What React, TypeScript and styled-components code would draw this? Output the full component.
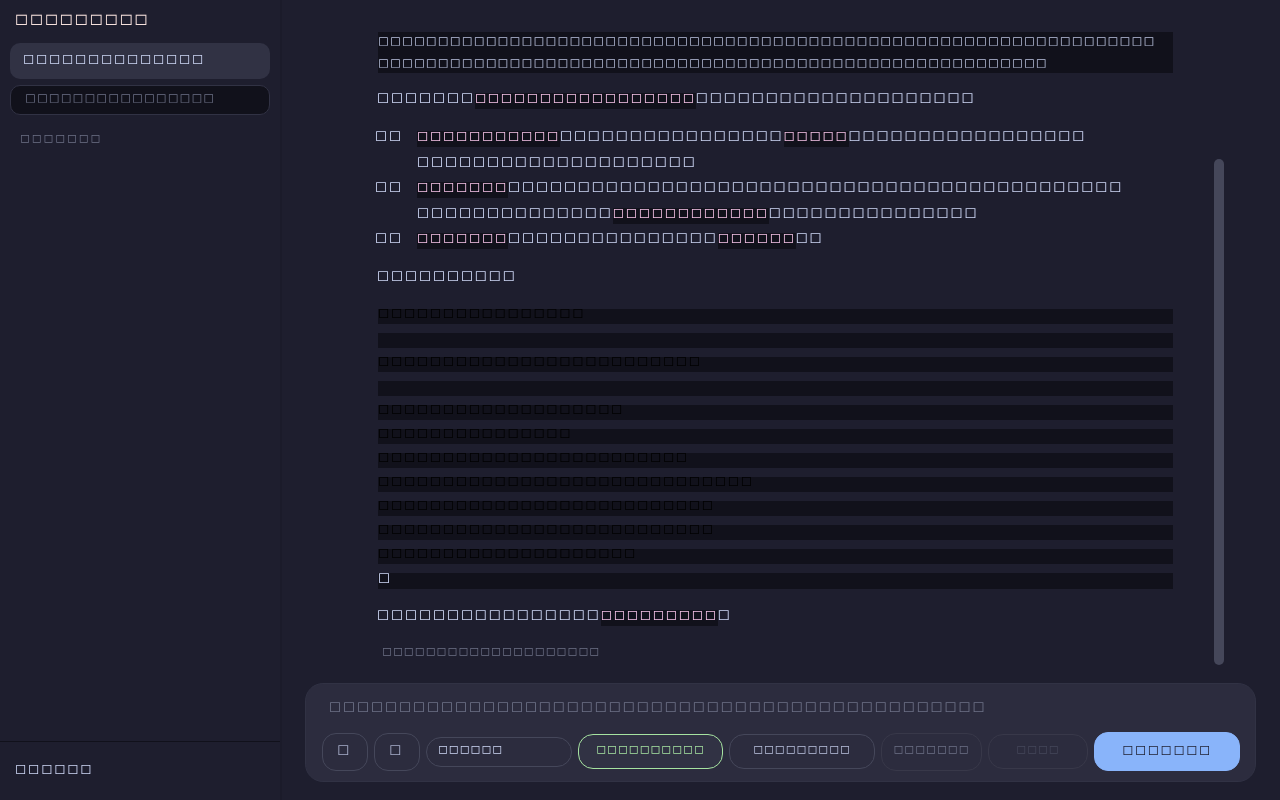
import styled, { createGlobalStyle } from "styled-components";

const box = (n: number) => "\u25FB".repeat(n);

const Global = createGlobalStyle`
  html, body { margin: 0; height: 100%; background: #1e1e2e; overflow: hidden; }
  #root { height: 100%; }
  * { box-sizing: border-box; }
`;

const Page = styled.div`
  display: grid;
  grid-template-columns: 282px 1fr;
  height: 800px;
  font-family: "DejaVu Sans", sans-serif;
  color: #cdd6f4;
  will-change: transform;
`;

const Sidebar = styled.aside`
  display: flex;
  flex-direction: column;
  border-right: 2px solid #1b1b2a;
`;

const Brand = styled.div`
  font-size: 16px;
  letter-spacing: 1.67px;
  color: #f5e0dc;
  padding: 9px 15px 0;
  height: 43px;
`;

const ChatItem = styled.div`
  margin: 0 10px 6px;
  width: 260px;
  height: 36px;
  border-radius: 10px;
  background: #313244;
  font-size: 14px;
  letter-spacing: 1.38px;
  padding: 7px 13px;
`;

const Search = styled.div`
  margin: 0 10px;
  width: 260px;
  height: 30px;
  border-radius: 10px;
  background: #11111b;
  border: 1px solid #313244;
  color: #6c7086;
  font-size: 13px;
  letter-spacing: 1.1px;
  padding: 4px 14px;
`;

const Hint = styled.div`
  margin: 16px 20px 0;
  font-size: 12px;
  letter-spacing: 1.8px;
  color: #6c7086;
`;

const Foot = styled.div`
  margin-top: auto;
  border-top: 1px solid #11111b;
  height: 59px;
  padding: 18px 15px;
  font-size: 14px;
  letter-spacing: 1.45px;
`;

const Main = styled.main`
  position: relative;
  display: flex;
  flex-direction: column;
  min-width: 0;
`;

const Thread = styled.div`
  flex: 1;
  display: flex;
  flex-direction: column;
  padding: 32px 107px 0 96px;
  overflow: hidden;
`;

const CodeBlock = styled.pre`
  display: flow-root;
  margin: 0 0 12px;
  background: #11111b;
  height: 41px;
  font: 13px/22px "DejaVu Sans", sans-serif;
  letter-spacing: 1.17px;
  color: #bac2de;
`;

const CodeLines = styled.span`
  display: block;
  margin-top: -2px;
`;

const Para = styled.p`
  margin: 0 0 12.5px -1px;
  font-size: 15px;
  letter-spacing: 1.53px;
  line-height: 25.5px;
`;

const Code = styled.code`
  padding-bottom: 4px;
  background: linear-gradient(transparent 4px, #11111b 4px);
  color: #f5c2e7;
  font-family: "DejaVu Sans", sans-serif;
  font-size: 14px;
  letter-spacing: 1.37px;
`;

const List = styled.ol`
  list-style: none;
  margin: 0 0 12.5px;
  padding: 0;
`;

const Item = styled.li`
  display: grid;
  grid-template-columns: 39px 1fr;
  font-size: 15px;
  letter-spacing: 1.53px;
  line-height: 25.5px;
`;

const Marker = styled.span`
  margin-left: -3px;
`;

const Rows = styled.div`
  display: flex;
  flex-direction: column;
  gap: 9px;
  margin: 7.5px 0 13px;
`;

const Row = styled.div<{ $last?: boolean }>`
  background: #11111b;
  height: ${(p) => (p.$last ? 16 : 15)}px;
  color: ${(p) => (p.$last ? "#cdd6f4" : "#000")};
  font-size: ${(p) => (p.$last ? 15 : 14)}px;
  letter-spacing: ${(p) => (p.$last ? 1.6 : 1.33)}px;
  line-height: ${(p) => (p.$last ? 9 : 7)}px;
`;

const Note = styled.div`
  margin: 4px 0 0 4px;
  font-size: 12px;
  letter-spacing: 0.95px;
  color: #6c7086;
`;

const Thumb = styled.div`
  position: absolute;
  left: 932px;
  top: 159px;
  width: 10px;
  height: 506px;
  border-radius: 5px;
  background: #45475a;
`;

const Composer = styled.div`
  margin: 0 24px 18px 23px;
  height: 99px;
  border-radius: 18px;
  background: #2c2c3e;
  border: 1px solid #313244;
  padding: 13px 15px 10px 16px;
`;

const Placeholder = styled.div`
  padding-left: 7px;
  font-size: 15px;
  letter-spacing: 1.54px;
  color: #6c7086;
  height: 35px;
`;

const Controls = styled.div`
  display: flex;
  align-items: center;
  gap: 6px;
`;

const Btn = styled.button<{ $w: number; $h: number; $color?: string; $line?: string; $fill?: string; $size?: number; $gap?: number; $r?: number }>`
  flex: none;
  width: ${(p) => p.$w}px;
  height: ${(p) => p.$h}px;
  border-radius: ${(p) => p.$r ?? 14}px;
  background: ${(p) => p.$fill ?? "transparent"};
  border: 1px solid ${(p) => p.$line ?? "#45475a"};
  color: ${(p) => p.$color ?? "#bac2de"};
  font-family: "DejaVu Sans", sans-serif;
  font-size: ${(p) => p.$size ?? 12}px;
  letter-spacing: ${(p) => p.$gap ?? 0.9}px;
  padding: 0 0 6px;
`;

const Select = styled(Btn)`
  text-align: left;
  padding-left: 11px;
  color: #cdd6f4;
`;

const rows = [16, 0, 25, 0, 19, 15, 24, 29, 26, 26, 20];

export default function App() {
  return (
    <Page>
      <Global />
      <Sidebar>
        <Brand>{box(9)}</Brand>
        <ChatItem>{box(14)}</ChatItem>
        <Search>{box(16)}</Search>
        <Hint>{box(7)}</Hint>
        <Foot>{box(6)}</Foot>
      </Sidebar>
      <Main>
        <Thread>
          <CodeBlock><CodeLines>{box(65)}{"\n"}{box(56)}</CodeLines></CodeBlock>
          <Para>{box(7)}<Code>{box(17)}</Code>{box(20)}</Para>
          <List>
            <Item><Marker>{box(2)}</Marker><span><Code>{box(11)}</Code>{box(16)}<Code>{box(5)}</Code>{box(17)} {box(20)}</span></Item>
            <Item><Marker>{box(2)}</Marker><span><Code>{box(7)}</Code>{box(44)} {box(14)}<Code>{box(12)}</Code>{box(15)}</span></Item>
            <Item><Marker>{box(2)}</Marker><span><Code>{box(7)}</Code>{box(15)}<Code>{box(6)}</Code>{box(2)}</span></Item>
          </List>
          <Para>{box(10)}</Para>
          <Rows>
            {rows.map((n, i) => <Row key={i}>{box(n)}</Row>)}
            <Row $last>{box(1)}</Row>
          </Rows>
          <Para>{box(16)}<Code>{box(9)}</Code>{box(1)}</Para>
          <Note>{box(20)}</Note>
        </Thread>
        <Thumb />
        <Composer>
          <Placeholder>{box(47)}</Placeholder>
          <Controls>
            <Btn $w={46} $h={38} $size={15} $gap={3} $color="#a6adc8">{box(1)}</Btn>
            <Btn $w={46} $h={38} $size={15} $gap={3} $color="#a6adc8">{box(1)}</Btn>
            <Select $w={146} $h={30} $r={15}>{box(6)}</Select>
            <Btn $w={145} $h={35} $r={15} $line="#a6e3a1" $color="#a6e3a1" $fill="#313244">{box(10)}</Btn>
            <Btn $w={146} $h={35} $r={15}>{box(9)}</Btn>
            <Btn $w={101} $h={38} $r={15} $line="#383849" $color="#6c7086">{box(7)}</Btn>
            <Btn $w={100} $h={35} $r={15} $line="#383849" $color="#45475a">{box(4)}</Btn>
            <Btn $w={146} $h={39} $line="#89b4fa" $fill="#89b4fa" $color="#1e1e2e" $size={13.5} $gap={1.6}>{box(7)}</Btn>
          </Controls>
        </Composer>
      </Main>
    </Page>
  );
}
